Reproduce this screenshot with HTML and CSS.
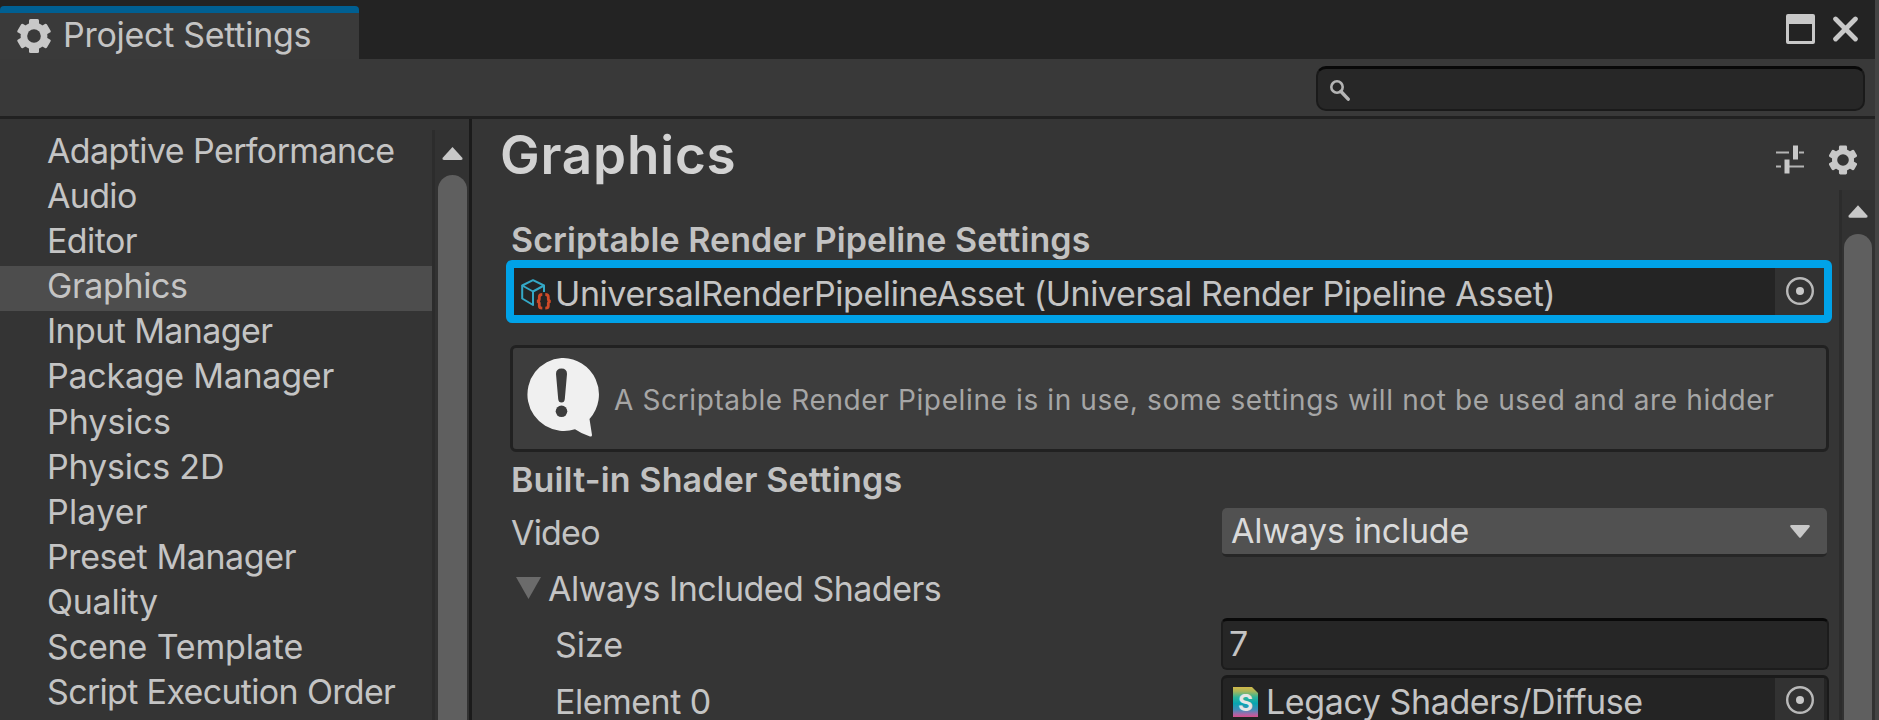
FILE: index.html
```html
<!DOCTYPE html>
<html lang="en">
<head>
<meta charset="utf-8">
<title>Project Settings</title>
<link rel="stylesheet" href="styles.css">
</head>
<body>
<div class="window">
  <header class="titlebar">
    <div class="tab">
      <svg class="tab-icon" width="34" height="34" viewBox="-17 -17 34 34"><g fill="#c8c8c8"><rect x="-5" y="-17" width="10" height="34" rx="1.5"/><rect x="-5" y="-17" width="10" height="34" rx="1.5" transform="rotate(60)"/><rect x="-5" y="-17" width="10" height="34" rx="1.5" transform="rotate(120)"/><circle r="13.4"/></g><circle r="6.8" fill="#3a3a3a"/></svg>
      <span class="tab-title">Project Settings</span>
    </div>
    <div class="window-buttons">
      <svg width="29" height="30" viewBox="0 0 29 30"><path fill="#c8c8c8" fill-rule="evenodd" d="M2 0H27Q29 0 29 2V28Q29 30 27 30H2Q0 30 0 28V2Q0 0 2 0ZM3 10V27H26V10Z"/></svg>
      <svg width="25" height="26" viewBox="0 0 25 26"><path d="M2.6 3 L22.4 23 M22.4 3 L2.6 23" stroke="#c8c8c8" stroke-width="4.8" stroke-linecap="round"/></svg>
    </div>
  </header>
  <div class="toolbar">
    <div class="search">
      <svg width="20" height="21" viewBox="0 0 20 21"><circle cx="7" cy="7" r="5.7" fill="none" stroke="#b4b4b4" stroke-width="2.6"/><path d="M11 11.5 L18.2 19.2" stroke="#b4b4b4" stroke-width="3.4" stroke-linecap="round"/></svg>
    </div>
  </div>
  <div class="body">
    <aside class="sidebar">
      <ul class="nav">
        <li class="tight">Adaptive Performance</li>
        <li class="tighter">Audio</li>
        <li class="tight">Editor</li>
        <li class="snug selected">Graphics</li>
        <li class="tight">Input Manager</li>
        <li class="near">Package Manager</li>
        <li>Physics</li>
        <li class="even">Physics 2D</li>
        <li class="loose">Player</li>
        <li class="snug">Preset Manager</li>
        <li class="near">Quality</li>
        <li class="even">Scene Template</li>
        <li class="tighter">Script Execution Order</li>
      </ul>
      <div class="scrollbar nav-scroll">
        <svg width="21" height="13" viewBox="0 0 21 13"><path fill="#c8c8c8" d="M10.5 0 L20.5 11 Q21 13 19 13 H2 Q0 13 .5 11Z"/></svg>
        <div class="thumb"></div>
      </div>
    </aside>
    <main class="panel">
      <div class="panel-head">
        <h1>Graphics</h1>
        <div class="head-icons">
          <svg width="30" height="30" viewBox="0 0 30 30"><path stroke="#b4b4b4" stroke-width="2" d="M1 7.5H14M24 7.5H29M1 21.5H6M14 21.5H29"/><path stroke="#c8c8c8" stroke-width="5" d="M20.5 .5V14.5M12 14.5V28.5"/></svg>
          <svg width="28" height="30" viewBox="-14.5 -15 29 30"><g fill="#c8c8c8"><rect x="-4.2" y="-15" width="8.4" height="30" rx="1.5"/><rect x="-4.2" y="-15" width="8.4" height="30" rx="1.5" transform="rotate(60)"/><rect x="-4.2" y="-15" width="8.4" height="30" rx="1.5" transform="rotate(120)"/><circle r="11.4"/></g><circle r="6" fill="#353535"/></svg>
        </div>
      </div>
      <div class="panel-body">
        <div class="form">
          <h2 class="srp-title">Scriptable Render Pipeline Settings</h2>
          <div class="object-field highlighted">
            <svg class="asset-icon" width="31" height="31" viewBox="0 0 31 31"><g fill="none" stroke="#34a8c6" stroke-width="2" stroke-linejoin="round"><path d="M12 1.2 L23 6.5 L12 12.5 L1.2 6.5Z"/><path d="M1.2 6.5V19.5L12 26V12.5M23 6.5V13"/></g><g fill="none" stroke="#cf4a28" stroke-width="2.8"><path d="M21.3 15.5Q18.3 15.5 18.3 18V20Q18.3 22 16 22.3Q18.3 22.6 18.3 24.6V27Q18.3 29.2 21.3 29.2"/><path d="M24.3 15.5Q27.3 15.5 27.3 18V20Q27.3 22 29.6 22.3Q27.3 22.6 27.3 24.6V27Q27.3 29.2 24.3 29.2"/></g></svg>
            <span class="object-name urp">UniversalRenderPipelineAsset (Universal Render Pipeline Asset)</span>
            <span class="picker"><svg width="28" height="28" viewBox="0 0 28 28"><circle cx="14" cy="14" r="12.8" fill="none" stroke="#b9b9b9" stroke-width="2.4"/><circle cx="14" cy="14" r="4" fill="#c8c8c8"/></svg></span>
          </div>
          <div class="helpbox">
            <svg width="74" height="80" viewBox="0 0 74 80"><path fill="#f0f0f0" d="M36.5 0A36.5 36.5 0 0 1 64.5 61L67 77Q67 79 65 78.5Q57 76 50 71.2A36.5 36.5 0 1 1 36.5 0Z"/><path fill="#3d3d3d" d="M31 16Q31 10.5 36.5 10.5T42 16L39.8 41Q39.5 44.5 36.5 44.5T33.2 41Z"/><circle cx="36.5" cy="53.3" r="5.8" fill="#3d3d3d"/></svg>
            <span>A Scriptable Render Pipeline is in use, some settings will not be used and are hidder</span>
          </div>
          <h2 class="shader-title">Built-in Shader Settings</h2>
          <div class="row row-video">
            <span class="label video">Video</span>
            <div class="dropdown"><span>Always include</span><svg width="20" height="13" viewBox="0 0 20 13"><path fill="#c8c8c8" d="M1.5 0H18.5Q20.5 0 19.5 2L11 12.3Q10 13.4 9 12.3L.5 2Q-.5 0 1.5 0Z"/></svg></div>
          </div>
          <div class="row row-fold">
            <svg width="25" height="22" viewBox="0 0 25 22"><path fill="#6b6b6b" d="M0 0H25L12.5 22Z"/></svg>
            <span class="label fold">Always Included Shaders</span>
          </div>
          <div class="row row-size">
            <span class="label nested">Size</span>
            <div class="input">7</div>
          </div>
          <div class="row row-element">
            <span class="label nested element">Element 0</span>
            <div class="object-field plain">
              <svg class="shader-icon" width="25" height="30" viewBox="0 0 25 30"><defs><linearGradient id="sg" x1="0" y1="0" x2="0" y2="1"><stop offset="0" stop-color="#d3b94a"/><stop offset=".14" stop-color="#a9b65a"/><stop offset=".34" stop-color="#2eb59a"/><stop offset=".55" stop-color="#08a5b0"/><stop offset=".75" stop-color="#3f8fb8"/><stop offset=".9" stop-color="#a667a8"/><stop offset="1" stop-color="#d8508c"/></linearGradient></defs><path fill="url(#sg)" d="M0 0H19L25 6V30H0Z"/><text x="12.5" y="23.5" text-anchor="middle" class="shader-letter">S</text></svg>
              <span class="object-name legacy">Legacy Shaders/Diffuse</span>
              <span class="picker"><svg width="28" height="28" viewBox="0 0 28 28"><circle cx="14" cy="14" r="12.8" fill="none" stroke="#b9b9b9" stroke-width="2.4"/><circle cx="14" cy="14" r="4" fill="#c8c8c8"/></svg></span>
            </div>
          </div>
        </div>
        <div class="scrollbar panel-scroll">
          <svg width="20" height="13" viewBox="0 0 21 13"><path fill="#c8c8c8" d="M10.5 0 L20.5 11 Q21 13 19 13 H2 Q0 13 .5 11Z"/></svg>
          <div class="thumb"></div>
        </div>
      </div>
    </main>
  </div>
</div>
</body>
</html>
```

FILE: styles.css
```css
* { box-sizing: border-box; }
body {
  margin: 0;
  background: #444;
  font-family: Inter, "Liberation Sans", sans-serif;
  font-size: 34px;
  color: #c4c4c4;
}
svg { display: block; flex: none; }
h1, h2, ul { margin: 0; padding: 0; }

.window {
  width: 1875px;
  height: 720px;
  overflow: hidden;
  display: flex;
  flex-direction: column;
  background: #353535;
}

/* Title bar */
.titlebar {
  height: 59px;
  flex: none;
  display: flex;
  justify-content: space-between;
  background: #232323;
}
.tab {
  width: 359px;
  height: 53px;
  margin-top: 6px;
  padding: 6px 0 0 17px;
  display: flex;
  gap: 12px;
  border-top: 7px solid #005f92;
  border-radius: 4px 4px 0 0;
  background: #3a3a3a;
}
.tab-title { line-height: 42px; letter-spacing: -0.28px; white-space: nowrap; margin-top: -5px; }
.window-buttons { display: flex; gap: 18px; padding: 14px 17px 0 0; }
.window-buttons svg:last-child { margin-top: 2px; }

/* Toolbar */
.toolbar {
  height: 60px;
  flex: none;
  padding: 7px 10px 0 0;
  display: flex;
  justify-content: flex-end;
  background: #393939;
  border-bottom: 3px solid #212121;
}
.search {
  width: 549px;
  height: 45px;
  padding: 11px 0 0 12px;
  border: 2px solid #1a1a1a;
  border-top: 3px solid #090909;
  border-radius: 10px;
  background: #272727;
}

.body { flex: 1; min-height: 0; display: flex; }

/* Sidebar */
.sidebar {
  width: 472px;
  flex: none;
  display: flex;
  border-right: 3px solid #1b1b1b;
  background: #343434;
}
.nav { width: 432px; padding-top: 12px; list-style: none; }
.nav li {
  height: 45.1px;
  padding-left: 47px;
  line-height: 39px;
  white-space: nowrap;
}
.nav .selected { background: #4d4d4d; }
.nav .loose { letter-spacing: 0.2px; }
.nav .even { letter-spacing: -0.15px; }
.nav .near { letter-spacing: -0.25px; }
.nav .snug { letter-spacing: -0.4px; }
.nav .tight { letter-spacing: -0.6px; }
.nav .tighter { letter-spacing: -0.67px; }

.scrollbar {
  flex: none;
  display: flex;
  flex-direction: column;
  align-items: center;
  border-left: 3px solid #2c2c2c;
  background: #323232;
}
.scrollbar .thumb {
  flex: 1;
  align-self: stretch;
  border-radius: 15px 15px 0 0;
  background: #5f5f5f;
}
.nav-scroll { width: 37px; margin-top: 11px; padding-top: 17px; }
.nav-scroll .thumb { margin: 15px 2px 0 3px; }

/* Settings panel */
.panel { flex: 1; min-width: 0; display: flex; flex-direction: column; }
.panel-head {
  height: 71px;
  flex: none;
  display: flex;
  justify-content: space-between;
  padding-left: 28px;
}
h1 { font-size: 53px; font-weight: 600; line-height: 72px; letter-spacing: 0.8px; color: #d2d2d2; }
.head-icons { display: flex; gap: 24px; padding: 26px 18px 0 0; }
.panel-body { flex: 1; min-height: 0; display: flex; }
.form { width: 1367px; flex: none; padding-left: 34px; }
h2 { font-size: 34px; font-weight: 600; line-height: 42px; height: 40px; color: #c2c2c2; white-space: nowrap; }
.srp-title { margin: 29px 0 0 5px; letter-spacing: 0.08px; }

.object-field { display: flex; background: #242424; }
.object-name { flex: 1; white-space: nowrap; }
.picker {
  width: 49px;
  display: flex;
  justify-content: center;
  background: #323232;
}
.highlighted {
  width: 1326px;
  height: 63px;
  margin-top: 1px;
  padding-left: 7px;
  border: 8px solid #00a2e8;
  border-radius: 6px;
}
.highlighted .asset-icon { margin: 11px 3px 0 0; }
.highlighted .picker { padding-top: 9px; }
.urp { line-height: 52px; height: 47px; letter-spacing: -0.42px; }

.helpbox {
  width: 1319px;
  height: 107px;
  margin: 22px 0 0 4px;
  padding: 10px 0 0 12px;
  display: flex;
  gap: 15px;
  border: 3px solid #212121;
  border-radius: 6px;
  background: #3d3d3d;
  font-size: 28px;
  line-height: 84px;
  letter-spacing: 0.62px;
  color: #a6a6a6;
  white-space: nowrap;
}
.shader-title { margin: 6px 0 0 5px; letter-spacing: 0.15px; line-height: 44px; }

.row { display: flex; padding-left: 5px; }
.label { width: 711px; flex: none; line-height: 40px; white-space: nowrap; }
.row-video { height: 53px; margin-top: 10px; }
.video { margin-top: 5px; letter-spacing: -0.8px; }
.dropdown {
  width: 605px;
  height: 49px;
  padding: 0 17px 0 9px;
  display: flex;
  justify-content: space-between;
  border-bottom: 3px solid #262626;
  border-radius: 5px;
  background: #515151;
  line-height: 46px;
  letter-spacing: -0.25px;
  color: #dadada;
}
.dropdown svg { margin-top: 17px; }
.row-fold { height: 50px; padding: 8px 0 0 10px; gap: 7px; }
.row-fold svg { margin-top: 8px; }
.fold { letter-spacing: -0.52px; }
.row-size { height: 57px; margin-top: 7px; }
.nested { width: 710px; padding-left: 44px; line-height: 54px; }
.element { letter-spacing: -0.5px; }
.input {
  width: 608px;
  height: 52px;
  padding-left: 6px;
  border: 2px solid #1c1c1c;
  border-top: 3px solid #090909;
  border-radius: 6px;
  background: #262626;
  line-height: 46px;
}
.plain {
  width: 608px;
  height: 52px;
  padding: 0 3px 0 10px;
  border: 2px solid #1a1a1a;
  border-top-width: 3px;
  border-radius: 6px;
  background: #242424;
  line-height: 48px;
}
.legacy { letter-spacing: -0.4px; }
.plain .shader-icon { margin: 9px 8px 0 0; }
.plain .picker { padding-top: 8px; }
.shader-letter { font: 700 23px Inter, sans-serif; fill: #e6e6e6; }

.panel-scroll { width: 36px; padding-top: 15px; }
.panel-scroll svg { margin-right: 2px; }
.panel-scroll .thumb { margin: 16px 3px 0 2px; }
```
